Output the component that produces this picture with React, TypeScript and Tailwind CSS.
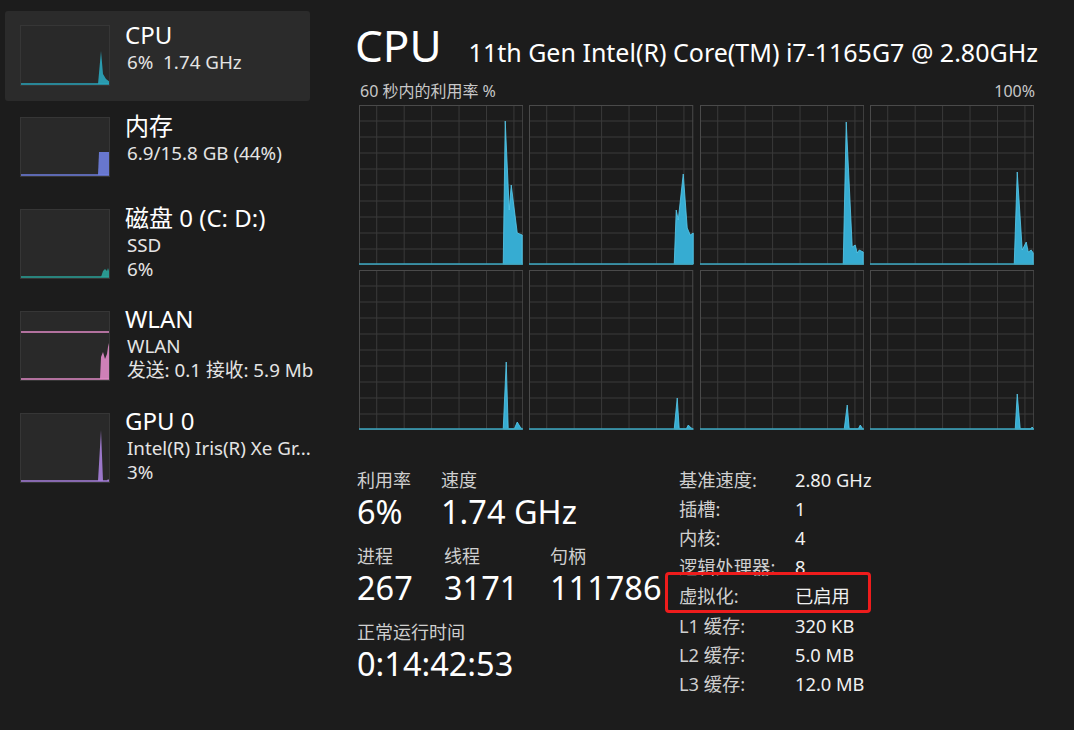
import React from "react";

const HGRID = [16, 32, 48, 64, 80, 96, 112, 128, 144];
const VGRID = [17.7, 45.1, 72.5, 99.9, 127.3, 154.7];

function Cell({ pts }: { pts: string }) {
  return (
    <div className="h-[160px] bg-[#1c1c1c]">
      <svg viewBox="0 0 164 160" preserveAspectRatio="none" className="block h-full w-full">
        {HGRID.map((y) => (
          <line key={"h" + y} x1="0" x2="164" y1={y} y2={y} stroke="#3a3a3a" strokeWidth="1" />
        ))}
        {VGRID.map((x) => (
          <line key={"v" + x} x1={x} x2={x} y1="0" y2="160" stroke="#3a3a3a" strokeWidth="1" />
        ))}
        <rect x="0.5" y="0.5" width="163" height="159" fill="none" stroke="#4a4a4a" strokeWidth="1" />
        <polygon points={pts} fill="#36acd2" stroke="#58cbee" strokeWidth="0.8" strokeLinejoin="round" />
        <line x1="0" x2="164" y1="159" y2="159" stroke="#3aa7c2" strokeWidth="1.5" />
      </svg>
    </div>
  );
}

const CELLS = [
  "144,159 146,16 150,105 152,80 158,128 163,130 163,159",
  "145,159 147,105 149,115 154,69 158,123 161,130 164,128 164,159",
  "143,159 146,17 152,142 155,140 157,148 159,145 163,147 163,159",
  "144,159 147,67 152,145 156,137 158,147 161,145 163,148 163,159",
  "144,159 147,92 149,159 155,159 158,152 161,157 163,159",
  "145,159 148,128 150,159 157,159 159,155 162,158 164,159",
  "144,159 147,135 149,159 158,159 160,155 162,158 163,159",
  "145,159 147,124 150,159 160,159 162,157 163,159",
];

function Thumb({
  cls,
  h,
  color,
  pts,
  extra,
}: {
  cls: string;
  h: number;
  color: string;
  pts: string;
  extra?: React.ReactNode;
}) {
  return (
    <div className={"w-[90px] shrink-0 border border-[#363636] bg-[#292929] " + cls}>
      <svg viewBox={`0 0 88 ${h - 2}`} preserveAspectRatio="none" className="block h-full w-full">
        {extra}
        <polygon points={pts} fill={color} fillOpacity="0.9" />
        <line x1="0" x2="88" y1={h - 3} y2={h - 3} stroke={color} strokeWidth="1.5" />
      </svg>
    </div>
  );
}

function SideItem({
  cls,
  textCls,
  thumb,
  title,
  lines,
}: {
  cls: string;
  textCls: string;
  thumb: React.ReactNode;
  title: string;
  lines: string[];
}) {
  return (
    <div className={"flex items-start pl-[15px] " + cls}>
      {thumb}
      <div className={"ml-[15px] flex flex-col " + textCls}>
        <div className="text-[24px] leading-[30px] text-white">{title}</div>
        {lines.map((l) => (
          <div key={l} className="whitespace-pre pl-[2px] text-[18.8px] leading-[24px] text-[#e4e4e4]">
            {l}
          </div>
        ))}
      </div>
    </div>
  );
}

function Stat({ label, value, cls }: { label: string; value: string; cls: string }) {
  return (
    <div className={"flex flex-col " + cls}>
      <div className="text-[18px] leading-[24px] text-[#cfcfcf]">{label}</div>
      <div className="text-[32.5px] leading-[40px] text-white">{value}</div>
    </div>
  );
}

const SPECS: [string, string][] = [
  ["基准速度:", "2.80 GHz"],
  ["插槽:", "1"],
  ["内核:", "4"],
  ["逻辑处理器:", "8"],
  ["虚拟化:", "已启用"],
  ["L1 缓存:", "320 KB"],
  ["L2 缓存:", "5.0 MB"],
  ["L3 缓存:", "12.0 MB"],
];

export default function App() {
  return (
    <div className="flex h-[730px] w-[1074px] overflow-hidden bg-[#1c1c1c] font-['Noto_Sans','Noto_Sans_CJK_SC',sans-serif] text-white">
      {/* Sidebar */}
      <div className="flex w-[316px] shrink-0 flex-col pl-[5px] pt-[11px]">
        <SideItem
          cls="h-[90px] w-[305px] rounded-[3px] bg-[#2b2b2b]"
          textCls="pt-[9px]"
          title="CPU"
          lines={["6%  1.74 GHz"]}
          thumb={
            <Thumb
              cls="mt-[14px] h-[61px] bg-[#272727]"
              h={61}
              color="#2aa6bd"
              pts="77,58 80,25 82,48 85,53 89,56 89,58"
            />
          }
        />
        <SideItem
          cls="h-[91px]"
          textCls="pt-[10px]"
          title="内存"
          lines={["6.9/15.8 GB (44%)"]}
          thumb={
            <Thumb
              cls="mt-[16px] h-[60px]"
              h={60}
              color="#6f7fe0"
              pts="77,57 78,34 88,34 88,57"
            />
          }
        />
        <SideItem
          cls="h-[101px]"
          textCls="pt-[11px]"
          title="磁盘 0 (C: D:)"
          lines={["SSD", "6%"]}
          thumb={
            <Thumb
              cls="mt-[17px] h-[70px]"
              h={70}
              color="#2aa39a"
              pts="80,67 82,61 84,59 86,61 87,58 88,61 88,67"
            />
          }
        />
        <SideItem
          cls="h-[102px]"
          textCls="pt-[11px]"
          title="WLAN"
          lines={["WLAN", "发送: 0.1 接收: 5.9 Mb"]}
          thumb={
            <Thumb
              cls="mt-[18px] h-[70px]"
              h={70}
              color="#e08ac6"
              pts="79,67 80,45 82,40 84,47 86,42 87,35 88,31 88,67"
              extra={<line x1="0" x2="88" y1="20" y2="20" stroke="#e08ac6" strokeWidth="1.5" />}
            />
          }
        />
        <SideItem
          cls="h-[102px]"
          textCls="pt-[11px]"
          title="GPU 0"
          lines={["Intel(R) Iris(R) Xe Gr...", "3%"]}
          thumb={
            <Thumb
              cls="mt-[18px] h-[70px]"
              h={70}
              color="#a77fdc"
              pts="77,67 80,16 82,67 86,67 87,65 88,66 88,67"
            />
          }
        />
      </div>

      {/* Main */}
      <div className="flex w-[700px] flex-col pl-[39px] pt-[19px]">
        <div className="flex h-[52px] items-baseline">
          <span className="text-[44px] leading-[52px] text-white">CPU</span>
          <span className="ml-[27px] whitespace-nowrap text-[25px] leading-[52px] text-white">
            11th Gen Intel(R) Core(TM) i7-1165G7 @ 2.80GHz
          </span>
        </div>
        <div className="mt-[10px] flex w-[680px] justify-between pl-[5px] text-[16px] leading-[20px] text-[#c8c8c8]">
          <span>60 秒内的利用率 %</span>
          <span>100%</span>
        </div>
        <div className="ml-[4px] mt-[4px] grid w-[675px] grid-cols-4 gap-x-[6px] gap-y-[5px]">
          {CELLS.map((p, i) => (
            <Cell key={i} pts={p} />
          ))}
        </div>

        <div className="mt-[38px] flex">
          <div className="flex w-[324px] shrink-0 flex-col pl-[2px]">
            <div className="flex">
              <Stat cls="w-[84px]" label="利用率" value="6%" />
              <Stat cls="" label="速度" value="1.74 GHz" />
            </div>
            <div className="mt-[12px] flex">
              <Stat cls="w-[87px]" label="进程" value="267" />
              <Stat cls="w-[106px]" label="线程" value="3171" />
              <Stat cls="" label="句柄" value="111786" />
            </div>
            <div className="mt-[12px] flex">
              <Stat cls="" label="正常运行时间" value="0:14:42:53" />
            </div>
          </div>
          <div className="-mt-[3px] flex flex-col">
            {SPECS.map(([k, v]) => (
              <div key={k} className="relative flex h-[29.2px] items-center text-[18.3px] leading-[24px]">
                <span className="w-[116px] text-[#cfcfcf]">{k}</span>
                <span className="text-[#f0f0f0]">{v}</span>
                {k === "虚拟化:" && (
                  <span className="absolute left-[-14px] top-[-10px] h-[41px] w-[206px] rounded-[4px] border-[3px] border-[#ee1c1c]" />
                )}
              </div>
            ))}
          </div>
        </div>
      </div>
    </div>
  );
}
